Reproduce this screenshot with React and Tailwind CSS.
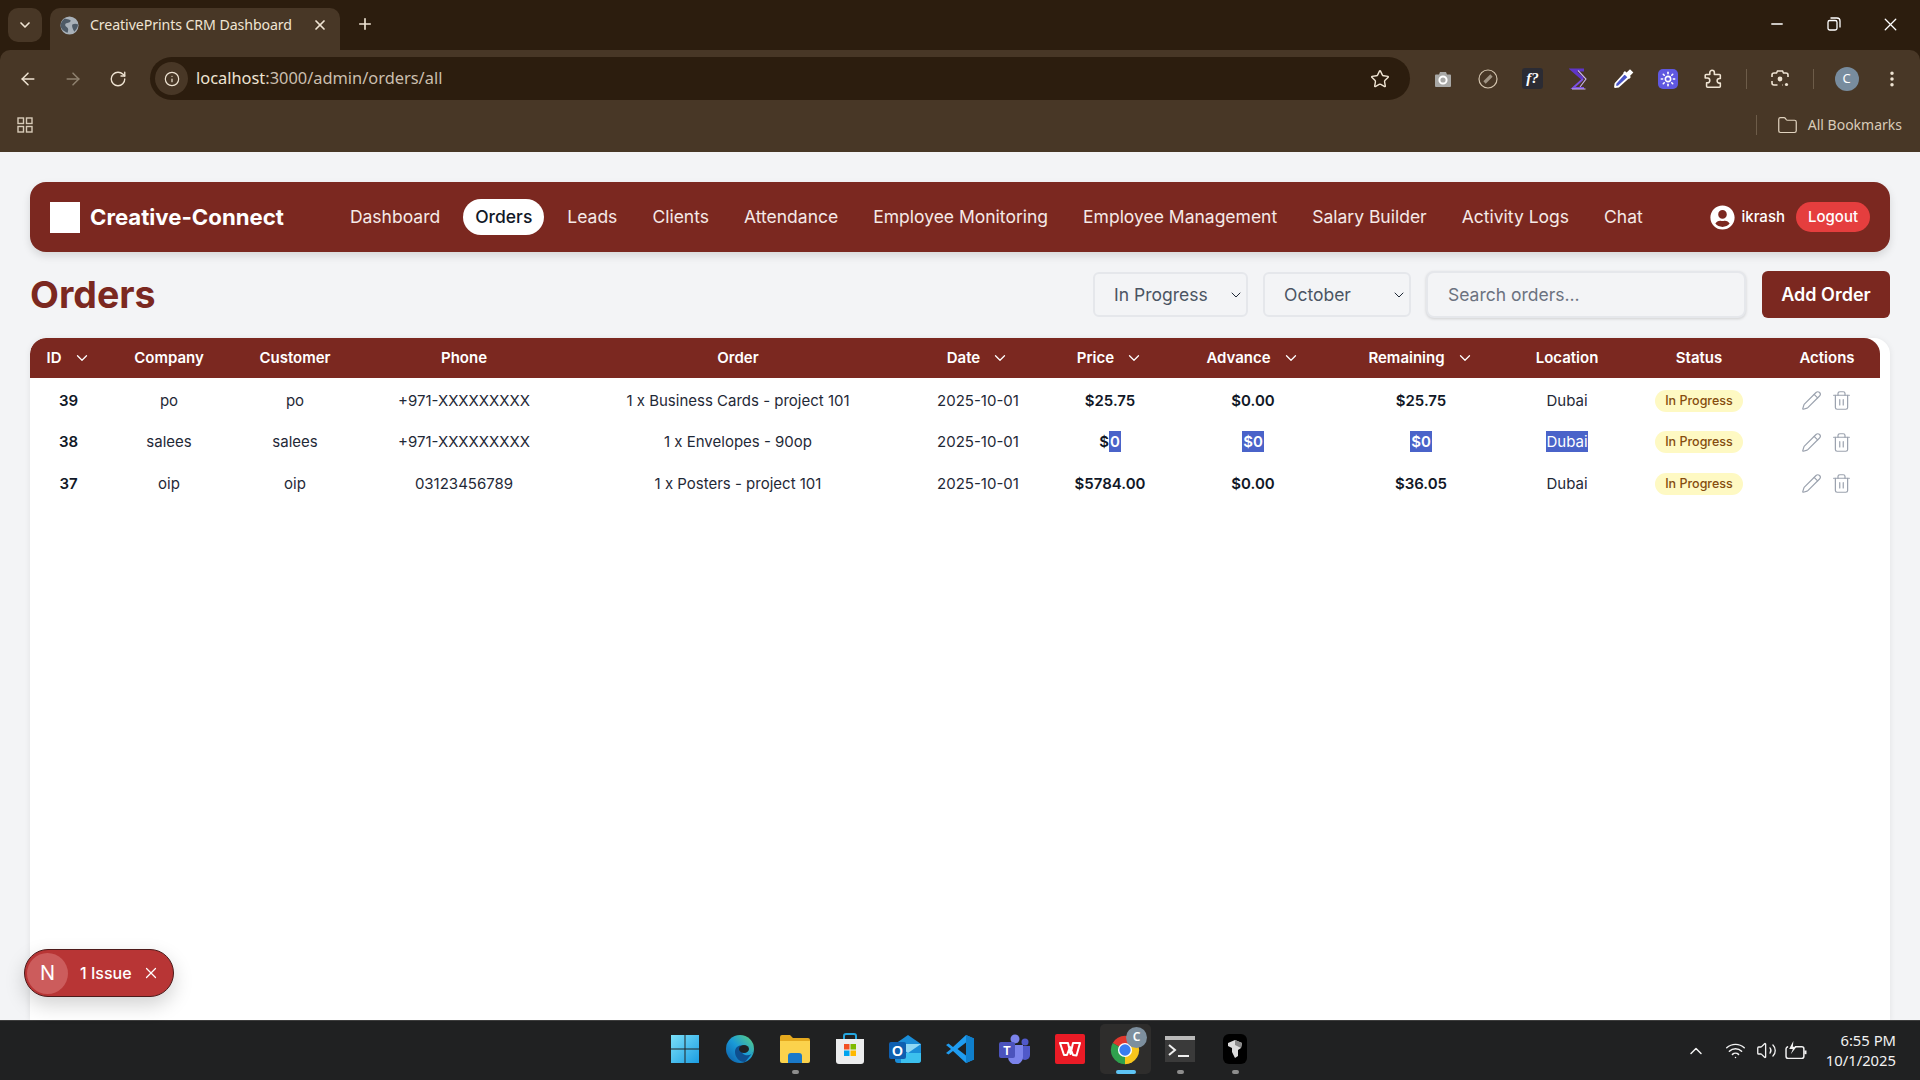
import { ArrowLeft, ArrowRight, RotateCw, Info, Star, X, Plus, ChevronDown, ChevronUp, Minus, Folder, Pencil, Trash2, Wifi, Volume2, EllipsisVertical, Sun } from 'lucide-react';
import { FaUserCircle } from 'react-icons/fa';

const FONT = "font-['Inter',sans-serif]";
const UI_FONT = "font-['Noto_Sans',sans-serif]";

const NAV = ['Dashboard', 'Orders', 'Leads', 'Clients', 'Attendance', 'Employee Monitoring', 'Employee Management', 'Salary Builder', 'Activity Logs', 'Chat'];

const COLUMNS = [
  { label: 'ID', sort: true }, { label: 'Company' }, { label: 'Customer' }, { label: 'Phone' }, { label: 'Order' },
  { label: 'Date', sort: true }, { label: 'Price', sort: true }, { label: 'Advance', sort: true }, { label: 'Remaining', sort: true },
  { label: 'Location' }, { label: 'Status' }, { label: 'Actions' },
];
const WIDTHS = ['w-[77px]', 'w-[124px]', 'w-[128px]', 'w-[210px]', 'w-[338px]', 'w-[142px]', 'w-[122px]', 'w-[164px]', 'w-[172px]', 'w-[120px]', 'w-[144px]', 'w-[109px]'];

const Sel = ({ children }) => <span className="bg-[#4a63c9] text-white py-[1px] px-[1px]">{children}</span>;
const SelTight = ({ children }) => <span className="bg-[#4a63c9] text-white py-[1px]">{children}</span>;

const ROWS = [
  { id: 39, company: 'po', customer: 'po', phone: '+971-XXXXXXXXX', order: '1 x Business Cards - project 101', price: '$25.75', advance: '$0.00', remaining: '$25.75', location: 'Dubai' },
  { id: 38, company: 'salees', customer: 'salees', phone: '+971-XXXXXXXXX', order: '1 x Envelopes - 90op', price: <>$<Sel>0</Sel></>, advance: <Sel>$0</Sel>, remaining: <Sel>$0</Sel>, location: <SelTight>Dubai</SelTight> },
  { id: 37, company: 'oip', customer: 'oip', phone: '03123456789', order: '1 x Posters - project 101', price: '$5784.00', advance: '$0.00', remaining: '$36.05', location: 'Dubai' },
];

function ToolBox({ children, className = 'w-[45px]' }) {
  return <div className={`${className} h-full shrink-0 flex items-center justify-center`}>{children}</div>;
}

function BrowserChrome() {
  return (
    <div className={`shrink-0 bg-[#2c1d0e] text-[#efe4d3] ${UI_FONT}`}>
      <div className="h-[50px] flex items-end pl-2 relative">
        <div className="w-[34px] h-[34px] mb-2 rounded-[10px] bg-[#483726] flex items-center justify-center">
          <ChevronDown size={16} strokeWidth={2.5} />
        </div>
        <div className="ml-2 w-[290px] h-[42px] bg-[#483726] rounded-t-[10px] flex items-center pl-[10px] pb-[8px]">
          <svg width="19" height="19" viewBox="0 0 20 20">
            <circle cx="10" cy="10" r="9.500" fill="#a9b1b9" />
            <path d="M5 2.500c2 1 5 .5 6 2s-2 3-4 3-2 3 0 4 2 3 1 6c-4-1-7-4-7.500-7.500C.5 7 3 4 5 2.500zM13 9c2-1 4-1 6 0 0 3-2 6-4 7.500-1-2-3-6-2-7.500z" fill="#4e5a66" />
          </svg>
          <span className="ml-[11px] text-[14.2px] tracking-[-0.1px] whitespace-nowrap">CreativePrints CRM Dashboard</span>
          <X size={16} strokeWidth={2.6} className="ml-[20px]" />
        </div>
        <Plus size={18} strokeWidth={2.2} className="ml-4 mb-[17px]" />
        <div className="ml-auto h-full flex items-center pb-[2px] pr-[1px]">
          <ToolBox className="w-[57px]"><Minus size={18} strokeWidth={1.7} className="text-white" /></ToolBox>
          <ToolBox className="w-[57px]">
            <svg width="14" height="14" viewBox="0 0 14 14" fill="none" stroke="#fff" strokeWidth="1.300"><rect x="1" y="3.500" width="9" height="9.500" rx="1.800" /><path d="M3.500 1h6.500a3 3 0 0 1 3 3v6.500" /></svg>
          </ToolBox>
          <ToolBox className="w-[57px]"><X size={21} strokeWidth={1.5} className="text-white" /></ToolBox>
        </div>
      </div>
      <div className="bg-[#483726] rounded-t-[10px] pb-[9px]">
        <div className="h-[57px] flex items-center pl-[5px] pr-[6px]">
          <ToolBox><ArrowLeft size={20} strokeWidth={1.8} /></ToolBox>
          <ToolBox><ArrowRight size={20} strokeWidth={1.8} className="text-[#8f8270]" /></ToolBox>
          <ToolBox><RotateCw size={18} strokeWidth={1.8} /></ToolBox>
          <div className="ml-[10px] flex-1 h-[43px] rounded-full bg-[#2c1d0e] flex items-center pl-[5px] pr-[20px]">
            <div className="w-[33px] h-[33px] rounded-full bg-[#483726] flex items-center justify-center"><Info size={16} strokeWidth={1.8} /></div>
            <span className="ml-[8px] text-[16.4px] whitespace-nowrap">localhost<span className="text-[#cbbfae]">:3000/admin/orders/all</span></span>
            <Star size={20} strokeWidth={1.7} className="ml-auto" />
          </div>
          <div className="ml-[10px] h-full flex">
            <ToolBox><ExtCamera /></ToolBox>
            <ToolBox><ExtCompass /></ToolBox>
            <ToolBox><div className="w-[21px] h-[21px] rounded-[3px] bg-[#2b2b33] text-white text-[15px] leading-[21px] text-center font-['Liberation_Serif',serif] italic font-bold">f?</div></ToolBox>
            <ToolBox><ExtS /></ToolBox>
            <ToolBox><ExtDropper /></ToolBox>
            <ToolBox><div className="w-5 h-5 rounded-[5px] bg-[#5f58e0] flex items-center justify-center"><Sun size={16} strokeWidth={2.4} className="text-white" /></div></ToolBox>
            <ToolBox><ExtPuzzle /></ToolBox>
            <ToolBox className="w-[22px]"><div className="w-[1px] h-5 bg-[#6d5c49]" /></ToolBox>
            <ToolBox><ExtLens /></ToolBox>
            <ToolBox className="w-[22px]"><div className="w-[1px] h-5 bg-[#6d5c49]" /></ToolBox>
            <ToolBox><div className="w-6 h-6 rounded-full bg-[#788c9e] text-white text-[13px] flex items-center justify-center">C</div></ToolBox>
            <ToolBox><EllipsisVertical size={20} strokeWidth={2.2} /></ToolBox>
          </div>
        </div>
        <div className="h-[36px] flex items-center pl-[17px] pr-[18px]">
          <svg width="16" height="16" viewBox="0 0 16 16" fill="none" stroke="currentColor" strokeWidth="1.400" className="text-[#d8cbb8]">
            <rect x="1" y="1" width="5.500" height="5.500" /><rect x="9.500" y="1" width="5.500" height="5.500" /><rect x="1" y="9.500" width="5.500" height="5.500" /><rect x="9.500" y="9.500" width="5.500" height="5.500" />
          </svg>
          <div className="ml-auto w-[1px] h-5 bg-[#6d5c49]" />
          <Folder size={21} strokeWidth={1.4} className="ml-[20px] text-[#e1d3bf]" />
          <span className="ml-[10px] text-[14px] text-[#d8cbb8] whitespace-nowrap pb-[2px]">All Bookmarks</span>
        </div>
      </div>
    </div>
  );
}

function ExtCamera() {
  return (
    <svg width="20" height="20" viewBox="0 0 20 20">
      <path d="M2 6.500a1 1 0 0 1 1-1h3l1-2.500h6l1 2.500h3a1 1 0 0 1 1 1V17a1 1 0 0 1-1 1H3a1 1 0 0 1-1-1z" fill="#a8a8a6" />
      <circle cx="10" cy="11" r="3.600" fill="none" stroke="#fff" strokeWidth="2" />
    </svg>
  );
}

function ExtCompass() {
  return (
    <svg width="20" height="20" viewBox="0 0 20 20" fill="none">
      <circle cx="10" cy="10" r="9" stroke="#d2c3ad" strokeWidth="1.200" />
      <path d="M6.500 13.500 13.500 6.500" stroke="#a09484" strokeWidth="3.200" />
    </svg>
  );
}

function ExtS() {
  return (
    <svg width="18" height="22" viewBox="0 0 18 22" fill="none">
      <path d="M15 2H3.500L14 11" stroke="#5f35c9" strokeWidth="3" />
      <path d="M9 2.500 17 11l-6 8" stroke="#c9b4f0" strokeWidth="1.100" />
      <path d="M14 11 4 20h11" stroke="#7c4fe0" strokeWidth="2" />
      <path d="M3 21h13.500" stroke="#c9b4f0" strokeWidth="1" />
    </svg>
  );
}

function ExtDropper() {
  return (
    <svg width="22" height="22" viewBox="0 0 22 22" fill="none">
      <path d="M13 5 3.500 15.500 3 19l3.500-.5L17 9z" fill="#4a55c8" stroke="#fff" strokeWidth="1.800" strokeLinejoin="round" />
      <path d="m12 4 6 6M15 6l3-3 1.500 1.500-3 3" stroke="#fff" strokeWidth="2.600" />
    </svg>
  );
}

function ExtPuzzle() {
  return (
    <svg width="22" height="22" viewBox="0 0 24 24" fill="none" stroke="currentColor" strokeWidth="1.700" strokeLinejoin="round">
      <path d="M8.500 5a2.500 2.500 0 0 1 5 0v2H19a1 1 0 0 1 1 1v3.500h-1a2.500 2.500 0 0 0 0 5h1V20a1 1 0 0 1-1 1H6a1 1 0 0 1-1-1v-4h1a2.500 2.500 0 0 0 0-5H3.500V8a1 1 0 0 1 1-1h4z" />
    </svg>
  );
}

function ExtLens() {
  return (
    <svg width="20" height="20" viewBox="0 0 20 20" fill="none" stroke="#efe4d3" strokeWidth="1.600">
      <path d="M2 8V6a2 2 0 0 1 2-2h2.500l1-2h5l1 2H16a2 2 0 0 1 2 2v2M2 12v2a2 2 0 0 0 2 2h3.500M12.500 16h.5" />
      <circle cx="10" cy="10" r="2.400" fill="#efe4d3" stroke="none" />
      <circle cx="16.500" cy="15.500" r="1.600" fill="#efe4d3" stroke="none" />
    </svg>
  );
}

function TableBlock() {
  return (
    <div className="mt-5 flex-1 bg-white rounded-t-[16px] shadow-[0_1px_6px_rgba(0,0,0,0.08)] overflow-hidden">
      <table className="table-fixed w-[1850px] border-collapse text-[15px] text-[#1f2937]">
        <colgroup>{WIDTHS.map((w) => <col key={w} className={w} />)}</colgroup>
        <thead>
          <tr className="h-10 bg-[#7b2820] text-white">
            {COLUMNS.map((col, i) => (
              <th key={col.label} className={`font-semibold text-[15px] p-0 ${i === 0 ? 'rounded-tl-[16px]' : ''} ${i === 11 ? 'rounded-tr-[16px] pl-[3px]' : ''}`}>
                <div className="flex items-center justify-center gap-[11px]">
                  {col.label}
                  {col.sort && <ChevronDown size={18} strokeWidth={1.7} />}
                </div>
              </th>
            ))}
          </tr>
        </thead>
        <tbody>
          {ROWS.map((r) => (
            <tr key={r.id} className="h-[41.5px] text-center">
              <td className="p-0 pt-1 font-semibold text-[#111827]">{r.id}</td>
              <td className="p-0 pt-1">{r.company}</td>
              <td className="p-0 pt-1">{r.customer}</td>
              <td className="p-0 pt-1">{r.phone}</td>
              <td className="p-0 pt-1">{r.order}</td>
              <td className="p-0 pt-1">2025-10-01</td>
              <td className="p-0 pt-1 font-semibold text-[#111827]">{r.price}</td>
              <td className="p-0 pt-1 font-semibold text-[#111827]">{r.advance}</td>
              <td className="p-0 pt-1 font-semibold text-[#111827]">{r.remaining}</td>
              <td className="p-0 pt-1">{r.location}</td>
              <td className="p-0 pt-[3px]">
                <span className="inline-flex items-center h-[22px] px-[10px] rounded-full bg-[#fef9c3] text-[#854d0e] text-[12.5px] font-medium whitespace-nowrap">In Progress</span>
              </td>
              <td className="p-0 pt-1">
                <div className="flex items-center justify-center gap-[9px] text-[#9ca3af] pl-[2px]">
                  <Pencil size={21} strokeWidth={1.4} />
                  <Trash2 size={21} strokeWidth={1.4} />
                </div>
              </td>
            </tr>
          ))}
        </tbody>
      </table>
    </div>
  );
}

function SelectBox({ value, className }) {
  return (
    <div className={`relative ${className}`}>
      <select defaultValue={value} className="appearance-none w-full h-[45px] pl-[19px] pt-[1px] rounded-[6px] border-2 border-[#e5e7eb] bg-[#f3f4f6] text-[17.5px]">
        <option>{value}</option>
      </select>
      <ChevronDown size={16} strokeWidth={1.5} className="absolute right-[4px] top-[15px] text-[#1f2937] pointer-events-none" />
    </div>
  );
}

function Page() {
  return (
    <div className={`flex-1 min-h-0 bg-[#f3f4f6] pt-[30px] px-[30px] flex flex-col ${FONT}`}>
      <nav className="shrink-0 h-[70px] rounded-[16px] bg-[#7b2820] shadow-[0_4px_8px_rgba(0,0,0,0.12)] flex items-center pl-5 pr-5 text-white">
        <div className="w-[30px] h-[31px] bg-white" />
        <span className="ml-[10px] text-[22.2px] font-bold whitespace-nowrap">Creative-Connect</span>
        <div className="ml-[54px] flex items-center gap-[11px]">
          {NAV.map((item) => (
            <span key={item} className={`px-3 h-9 flex items-center rounded-full text-[17.5px] whitespace-nowrap ${item === 'Orders' ? 'bg-white text-[#111827] font-medium' : 'text-[#f5e9e7]'}`}>{item}</span>
          ))}
        </div>
        <div className="ml-auto flex items-center">
          <FaUserCircle size={25} />
          <span className="ml-[6px] text-[15px] font-medium">ikrash</span>
          <span className="ml-[11px] w-[74px] h-[30px] rounded-full bg-[#e53e3e] text-[15px] font-medium flex items-center justify-center">Logout</span>
        </div>
      </nav>

      <div className="shrink-0 mt-[19px] h-[47px] flex items-center">
        <h1 className="text-[37.5px] font-bold text-[#7b2820] pt-[1px]">Orders</h1>
        <div className="ml-auto flex items-center text-[17.5px] text-[#4b5563]">
          <SelectBox value="In Progress" className="w-[155px]" />
          <SelectBox value="October" className="ml-[15px] w-[148px]" />
          <input readOnly placeholder="Search orders..." className="ml-[15px] w-[320px] h-[47px] pl-5 rounded-[8px] border-2 border-[#e5e7eb] bg-[#f3f4f6] shadow-[0_1px_3px_rgba(0,0,0,0.15)] text-[17.5px] placeholder:text-[#6b7280]" />
          <button className="ml-[16px] w-[128px] h-[47px] rounded-[6px] bg-[#7b2820] text-white font-semibold text-[18px]">Add Order</button>
        </div>
      </div>

      <TableBlock />
    </div>
  );
}

function IssueBadge() {
  return (
    <div className={`absolute left-6 top-[949px] w-[150px] h-[48px] rounded-full bg-[#b83535] border border-[#4d1a1a] shadow-[0_8px_20px_rgba(0,0,0,0.18)] flex items-center pl-[2px] text-white ${FONT}`}>
      <div className="w-[41px] h-[41px] rounded-full bg-[#cc5c5c] flex items-center justify-center text-[20px]">N</div>
      <span className="ml-[12px] text-[16px] font-medium whitespace-nowrap">1 Issue</span>
      <X size={18} strokeWidth={1.6} className="ml-[10px]" />
    </div>
  );
}

const TB = {
  windows: (
    <svg width="30" height="30" viewBox="0 0 30 30">
      <defs><linearGradient id="win" x1="0" y1="0" x2="1" y2="1"><stop offset="0" stopColor="#7be0f9" /><stop offset="1" stopColor="#1b9de2" /></linearGradient></defs>
      <path d="M1 1h13.500v13.500H1zM15.500 1H29v13.500H15.500zM1 15.500h13.500V29H1zM15.500 15.500H29V29H15.500z" fill="url(#win)" />
    </svg>
  ),
  edge: (
    <svg width="30" height="30" viewBox="0 0 30 30">
      <defs><linearGradient id="edg" x1="0" y1="1" x2="1" y2="0"><stop offset="0" stopColor="#0c59a4" /><stop offset="0.5" stopColor="#1a9ad8" /><stop offset="1" stopColor="#5fd47a" /></linearGradient></defs>
      <circle cx="15" cy="15" r="14" fill="url(#edg)" />
      <path d="M29 17c-1 3-5 5-9 4-3-1-4-3-3-6 0-2 2-3 3-2-4-3-10-1-10 5 0 5 4 10 10 10z" fill="#0f4f8f" />
      <ellipse cx="19" cy="15" rx="5" ry="4" fill="#1f2123" />
    </svg>
  ),
  files: (
    <svg width="32" height="30" viewBox="0 0 32 30">
      <path d="M1 3a2 2 0 0 1 2-2h8l3 3h15a2 2 0 0 1 2 2v4H1z" fill="#e5a91e" />
      <path d="M1 7h30v20a2 2 0 0 1-2 2H3a2 2 0 0 1-2-2z" fill="#fbd24c" />
      <path d="M9 22a3 3 0 0 1 3-3h8a3 3 0 0 1 3 3v7H9z" fill="#1a79c9" />
    </svg>
  ),
  store: (
    <svg width="30" height="32" viewBox="0 0 30 32">
      <path d="M9 6V3a2 2 0 0 1 2-2h8a2 2 0 0 1 2 2v3" fill="none" stroke="#25a7e0" strokeWidth="2" />
      <path d="M1 6h28v22a3 3 0 0 1-3 3H4a3 3 0 0 1-3-3z" fill="#ecedee" />
      <path d="M9 11h5.500v5.500H9z" fill="#f25022" /><path d="M15.500 11H21v5.500h-5.500z" fill="#7fba00" /><path d="M9 17.500h5.500V23H9z" fill="#00a4ef" /><path d="M15.500 17.500H21V23h-5.500z" fill="#ffb900" />
    </svg>
  ),
  outlook: (
    <div className="relative w-[32px] h-[30px]">
      <svg width="32" height="30" viewBox="0 0 32 30">
        <path d="M6 10 19 1l13 9v16a3 3 0 0 1-3 3H9a3 3 0 0 1-3-3z" fill="#1a8dd8" />
        <path d="M6 10h26L19 19z" fill="#8fd8f5" />
        <path d="M12 19h20v7a3 3 0 0 1-3 3H12z" fill="#3cc0ee" />
        <rect x="0" y="8" width="17" height="17" rx="2" fill="#0e5fb0" />
      </svg>
      <span className="absolute left-0 top-[7px] w-[17px] text-center text-white text-[14px] font-bold font-['Liberation_Sans',sans-serif]">O</span>
    </div>
  ),
  vscode: (
    <svg width="30" height="30" viewBox="0 0 30 30">
      <path d="M21 1 29 4.500v21L21 29 8 17l-4.500 3.500L1 19l5-4-5-4 2.500-1.500L8 13z" fill="#1f9cf0" />
      <path d="M21 8.500v13L12.500 15z" fill="#1f2123" />
      <path d="M21 1 29 4.500v21L21 29z" fill="#0f7fcc" />
    </svg>
  ),
  teams: (
    <div className="relative w-[32px] h-[30px]">
      <svg width="32" height="30" viewBox="0 0 32 30">
        <circle cx="16" cy="5" r="4.500" fill="#7b83eb" /><circle cx="26" cy="8" r="3.500" fill="#5059c9" />
        <path d="M21 12h10v9a5 5 0 0 1-10 0z" fill="#5059c9" />
        <path d="M9 11h15v12a7 7 0 0 1-15 0z" fill="#7b83eb" />
        <rect x="0" y="8" width="16" height="16" rx="2" fill="#4b53bc" />
      </svg>
      <span className="absolute left-0 top-[8px] w-[16px] text-center text-white text-[12px] font-bold font-['Liberation_Sans',sans-serif]">T</span>
    </div>
  ),
  wps: (
    <svg width="30" height="30" viewBox="0 0 30 30" fill="none">
      <rect width="30" height="30" rx="2" fill="#ea1b26" />
      <path d="M5 9h8l2.500 11L18 9h7l-3.500 12.500-3.500-.5-3-8-3 8h-3z" stroke="#fff" strokeWidth="2" strokeLinejoin="round" />
    </svg>
  ),
  chrome: (
    <div className="relative w-[32px] h-[32px]">
      <svg width="34" height="34" viewBox="0 0 24 24" className="-m-[1px]">
        <path d="M12 12 3.340 7A10 10 0 0 1 20.660 7z" fill="#e0382e" />
        <path d="M12 12 20.660 7A10 10 0 0 1 12 22z" fill="#f8c51c" />
        <path d="M12 12V22A10 10 0 0 1 3.340 7z" fill="#2fa14d" />
        <circle cx="12" cy="12" r="5" fill="#fff" /><circle cx="12" cy="12" r="4" fill="#3a7df0" />
      </svg>
      <span className="absolute -right-[6px] -top-[6px] w-[21px] h-[21px] rounded-full bg-[#7d8f9e] text-white text-[12px] font-semibold flex items-center justify-center">C</span>
    </div>
  ),
  terminal: (
    <div className="w-[30px] h-[26px] bg-[#3a3a3a] relative">
      <div className="h-[4px] bg-[#b9b9b9]" />
      <svg width="30" height="22" viewBox="0 0 30 22" fill="none" stroke="#f0f0f0" strokeWidth="2"><path d="m4 5 6 5-6 5M13 16h11" /></svg>
    </div>
  ),
  cube: (
    <div className="w-[24px] h-[30px] rounded-[6px] bg-black flex items-center justify-center">
      <svg width="16" height="20" viewBox="0 0 16 20"><path d="M1 4 8 1l7 3-1 5-3 2v6l-3 2-3-6V9L1 7z" fill="#dcdcdc" /><path d="M8 1l7 3-1 5-6-3z" fill="#8a8a8a" /></svg>
    </div>
  ),
};

const TASK_ICONS = [
  { key: 'windows' }, { key: 'edge' }, { key: 'files', dot: true }, { key: 'store' }, { key: 'outlook' }, { key: 'vscode' },
  { key: 'teams' }, { key: 'wps' }, { key: 'chrome', active: true }, { key: 'terminal', dot: true }, { key: 'cube', dot: true },
];

function Taskbar() {
  return (
    <div className={`shrink-0 h-[60px] border-t border-[#3d3d3d] bg-[#202122] grid grid-cols-[1fr_auto_1fr] text-[#f2f2f2] ${UI_FONT}`}>
      <div />
      <div className="flex items-start pt-[3px]">
        {TASK_ICONS.map((t) => (
          <div key={t.key} className="relative w-[55px] h-[50px] flex items-center justify-center">
            {t.active && <div className="absolute inset-x-[2px] inset-y-0 rounded-[5px] bg-[#2e2d2c]" />}
            <div className="relative">{TB[t.key]}</div>
            {t.dot && <div className="absolute left-[24px] bottom-0 w-[7px] h-[4px] rounded-full bg-[#8d8d8d]" />}
            {t.active && <div className="absolute left-[18px] bottom-0 w-[20px] h-[4px] rounded-full bg-[#5ec4f5]" />}
          </div>
        ))}
      </div>
      <div className="flex items-center justify-end pr-6">
        <ChevronUp size={20} strokeWidth={1.8} />
        <Wifi size={21} strokeWidth={1.7} className="ml-[19px]" />
        <Volume2 size={21} strokeWidth={1.5} className="ml-[10px]" />
        <svg width="24" height="21" viewBox="0 0 22 20" fill="none" stroke="currentColor" strokeWidth="1.400" className="ml-[7px]">
          <path d="M3 6.500H3.500A2 2 0 0 0 1.500 8.500v7a2 2 0 0 0 2 2h13a2 2 0 0 0 2-2v-7a2 2 0 0 0-2-2H10" />
          <path d="M20 10v3.500" strokeWidth="2" />
          <path d="M8.500 1 4.500 8.500h3.500L6 13.500 11.500 6.500H8z" fill="currentColor" stroke="none" />
        </svg>
        <div className="ml-[18px] text-right text-[14.8px] leading-[20px] whitespace-nowrap pb-[2px]">
          <div>6:55 PM</div>
          <div>10/1/2025</div>
        </div>
      </div>
    </div>
  );
}

export default function App() {
  return (
    <div className="relative w-[1920px] h-[1080px] overflow-hidden flex flex-col">
      <BrowserChrome />
      <Page />
      <Taskbar />
      <IssueBadge />
    </div>
  );
}
